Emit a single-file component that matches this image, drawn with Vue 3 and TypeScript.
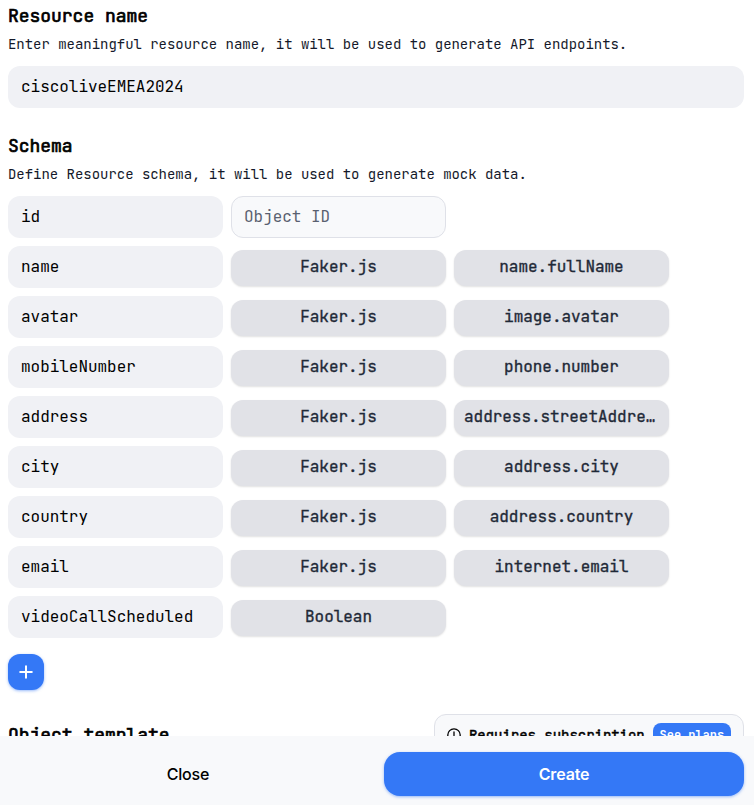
<script setup lang="ts">
import { ref } from 'vue'

interface Field {
  name: string
  type: string
  method?: string
  locked?: boolean
}

const resourceName = ref<string>('ciscoliveEMEA2024')

const fields = ref<Field[]>([
  { name: 'id', type: 'Object ID', locked: true },
  { name: 'name', type: 'Faker.js', method: 'name.fullName' },
  { name: 'avatar', type: 'Faker.js', method: 'image.avatar' },
  { name: 'mobileNumber', type: 'Faker.js', method: 'phone.number' },
  { name: 'address', type: 'Faker.js', method: 'address.streetAddress' },
  { name: 'city', type: 'Faker.js', method: 'address.city' },
  { name: 'country', type: 'Faker.js', method: 'address.country' },
  { name: 'email', type: 'Faker.js', method: 'internet.email' },
  { name: 'videoCallScheduled', type: 'Boolean' },
])

function addField(): void {
  fields.value.push({ name: '', type: 'Boolean' })
}
</script>

<template>
  <div class="dialog">
    <main class="content">
      <section class="resource">
        <h2 class="title">Resource name</h2>
        <p class="hint">Enter meaningful resource name, it will be used to generate API endpoints.</p>
        <input v-model="resourceName" class="field" type="text" spellcheck="false" />
      </section>

      <section class="schema">
        <h2 class="title">Schema</h2>
        <p class="hint">Define Resource schema, it will be used to generate mock data.</p>
        <div class="rows">
          <div v-for="(field, i) in fields" :key="i" class="row">
            <input v-model="field.name" class="field" type="text" spellcheck="false" />
            <input v-if="field.locked" class="field readonly" :value="field.type" readonly />
            <button v-else class="pick"><span class="label">{{ field.type }}</span></button>
            <button v-if="field.method" class="pick"><span class="label">{{ field.method }}</span></button>
          </div>
        </div>
        <button class="add" aria-label="Add field" @click="addField">
          <svg width="14" height="14" viewBox="0 0 14 14" fill="none" stroke="currentColor" stroke-width="2" stroke-linecap="round">
            <path d="M7 1.2v11.6M1.2 7h11.6" />
          </svg>
        </button>
      </section>

      <section class="template">
        <h2 class="title">Object template</h2>
        <div class="notice">
          <svg width="14" height="14" viewBox="0 0 14 14" fill="none" stroke="currentColor" stroke-width="1.3" stroke-linecap="round">
            <circle cx="7" cy="7" r="6.2" />
            <path d="M7 4v3.4M7 9.8v.1" />
          </svg>
          <span class="notice-text">Requires subscription</span>
          <button class="plans">See plans</button>
        </div>
      </section>
    </main>

    <footer class="footer">
      <button class="action">Close</button>
      <button class="action primary">Create</button>
    </footer>
  </div>
</template>

<style>
body {
  margin: 0;
  background: #fff;
  overflow: hidden;
}
</style>

<style scoped>
.dialog {
  display: flex;
  flex-direction: column;
  height: 100vh;
  color: #000;
  font-family: 'JetBrains Mono', 'DejaVu Sans Mono', 'Liberation Mono', monospace;
  letter-spacing: -0.002em;
}
.dialog * {
  box-sizing: border-box;
}
button,
input {
  margin: 0;
  border: 0;
  font: inherit;
  letter-spacing: inherit;
  color: inherit;
  outline: none;
}
button {
  cursor: pointer;
}
.content {
  flex: 1;
  min-height: 0;
  overflow: hidden;
  padding: 2px 10px 0 8px;
}
.title {
  margin: 0;
  font-size: 18px;
  line-height: 28px;
  font-weight: 400;
  -webkit-text-stroke: 0.7px currentColor;
}
.hint {
  margin: 4px 0 12px;
  font-size: 14px;
  line-height: 20px;
  color: #14192a;
  white-space: nowrap;
}
.field {
  display: block;
  width: 100%;
  height: 42px;
  padding: 0 13px 2px;
  border-radius: 12px;
  background: #f0f1f5;
  font-size: 16px;
}
.schema {
  margin-top: 24px;
}
.rows {
  display: flex;
  flex-direction: column;
  gap: 8px;
}
.row {
  display: grid;
  grid-template-columns: repeat(3, 215px);
  column-gap: 8px;
  align-items: center;
  height: 42px;
}
.readonly {
  padding: 0 12px 2px;
  border: 1px solid #dfe1e8;
  background: #f8f9fb;
  color: #596070;
}
.pick {
  height: 36px;
  margin-top: 1px;
  padding: 0 10px 1px;
  border-radius: 12px;
  background: #e1e2e7;
  box-shadow: 0 1px 2px rgba(0, 0, 0, 0.12);
  color: #1f2937;
  font-size: 16px;
  min-width: 0;
  -webkit-text-stroke: 0.35px currentColor;
}
.label {
  display: block;
  overflow: hidden;
  line-height: 22px;
  text-overflow: ellipsis;
  white-space: nowrap;
}
.add {
  display: grid;
  place-items: center;
  width: 36px;
  height: 36px;
  margin-top: 16px;
  padding: 0;
  border-radius: 12px;
  background: #3478f6;
  box-shadow: 0 1px 3px rgba(52, 120, 246, 0.5);
  color: #fff;
}
.template {
  display: flex;
  align-items: center;
  justify-content: space-between;
  margin-top: 24px;
}
.notice {
  display: flex;
  align-items: center;
  width: 310px;
  height: 42px;
  padding: 0 12px;
  border: 1px solid #dfe1e8;
  border-radius: 12px;
  background: #f8f9fb;
}
.notice-text {
  margin: 0 8px;
  font-size: 14px;
  white-space: nowrap;
  -webkit-text-stroke: 0.5px currentColor;
}
.plans {
  flex: 1;
  height: 24px;
  padding: 0;
  border-radius: 8px;
  background: #3478f6;
  color: #fff;
  font-size: 12px;
  font-weight: 700;
  white-space: nowrap;
}
.footer {
  display: grid;
  grid-template-columns: 1fr 1fr;
  gap: 16px;
  height: 69px;
  padding: 16px 10px 9px 8px;
  background: #f8f9fb;
  font-family: Inter, 'Liberation Sans', sans-serif;
  letter-spacing: -0.01em;
}
.action {
  height: 44px;
  padding: 0;
  border-radius: 16px;
  background: transparent;
  font-size: 16px;
  font-weight: 500;
}
.primary {
  background: #3478f6;
  box-shadow: 0 1px 3px rgba(52, 120, 246, 0.5);
  color: #fff;
  font-weight: 600;
}
</style>
